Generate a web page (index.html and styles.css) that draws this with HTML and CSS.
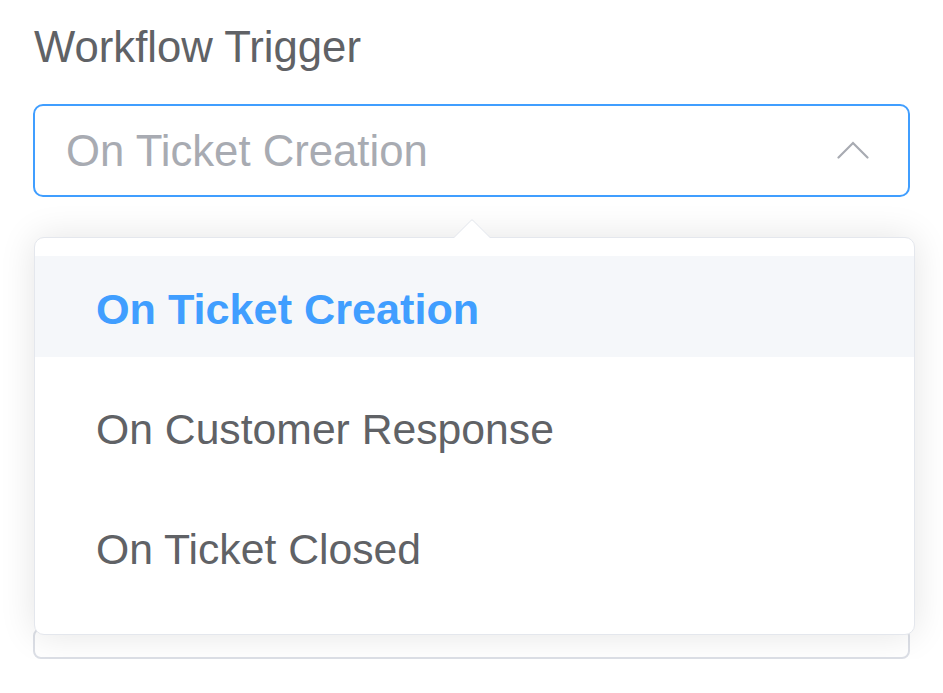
FILE: index.html
```html
<!DOCTYPE html>
<html lang="en">
<head>
<meta charset="utf-8">
<title>Workflow Trigger</title>
<link rel="stylesheet" href="styles.css">
</head>
<body>
<div class="page">
  <div class="field">
    <div class="label">Workflow Trigger</div>
    <div class="select-wrap">
      <div class="select is-focus">
        <span class="placeholder">On Ticket Creation</span>
        <svg class="chevron" width="32" height="18" viewBox="0 0 32 18" aria-hidden="true">
          <polyline points="1.5,16.5 16,2 30.5,16.5" fill="none" stroke="#a8abb2" stroke-width="2.2" stroke-linecap="round" stroke-linejoin="miter"/>
        </svg>
      </div>
      <div class="dropdown">
        <div class="caret"></div>
        <ul class="options">
          <li class="option selected">On Ticket Creation</li>
          <li class="option">On Customer Response</li>
          <li class="option">On Ticket Closed</li>
        </ul>
      </div>
    </div>
  </div>
  <div class="field next">
    <div class="select plain"></div>
  </div>
</div>
</body>
</html>
```

FILE: styles.css
```css
html, body {
  margin: 0;
  padding: 0;
  background: #ffffff;
}

body {
  font-family: "Liberation Sans", Arial, sans-serif;
  color: #606266;
}

.page {
  padding: 23px 33px 0 33px;
}

.label {
  font-size: 43.7px;
  line-height: 48px;
  color: #606266;
  padding-left: 1px;
  margin-bottom: 33px;
}

.select-wrap {
  position: relative;
}

.select {
  box-sizing: border-box;
  height: 93px;
  border: 2px solid #dcdfe6;
  border-radius: 10px;
  background: #ffffff;
  display: flex;
  align-items: center;
  padding: 0 39px 0 31px;
}

.select.is-focus {
  border-color: #409eff;
}

.placeholder {
  flex: 1;
  font-size: 43.7px;
  line-height: 48px;
  color: #a8abb2;
  white-space: nowrap;
}

.chevron {
  display: block;
  flex: none;
  margin-top: -2px;
}

.dropdown {
  position: absolute;
  z-index: 10;
  left: 1px;
  top: 133px;
  width: 881px;
  box-sizing: border-box;
  background: #ffffff;
  border: 1px solid #e4e7ed;
  border-radius: 10px;
  box-shadow: 0 0 36px rgba(0, 0, 0, 0.11);
  padding: 18px 0 37px 0;
}

.caret {
  position: absolute;
  left: 424px;
  top: -14px;
  width: 25px;
  height: 25px;
  background: #ffffff;
  border-top: 1px solid #e4e7ed;
  border-left: 1px solid #e4e7ed;
  border-top-left-radius: 2px;
  transform: rotate(45deg);
}

.options {
  list-style: none;
  margin: 0;
  padding: 0;
  display: flex;
  flex-direction: column;
  gap: 19px;
}

.option {
  box-sizing: border-box;
  height: 101px;
  padding: 4px 96px 0 61px;
  display: flex;
  align-items: center;
  font-size: 42.7px;
  line-height: 48px;
  color: #606266;
  white-space: nowrap;
}

.option.selected {
  background: #f5f7fa;
  color: #409eff;
  font-weight: 700;
  font-size: 43.2px;
}

.field.next {
  margin-top: 431px;
}

.select.plain {
  height: 31px;
  border-width: 2px;
  border-color: #dcdfe6;
  border-radius: 8px;
}
```
